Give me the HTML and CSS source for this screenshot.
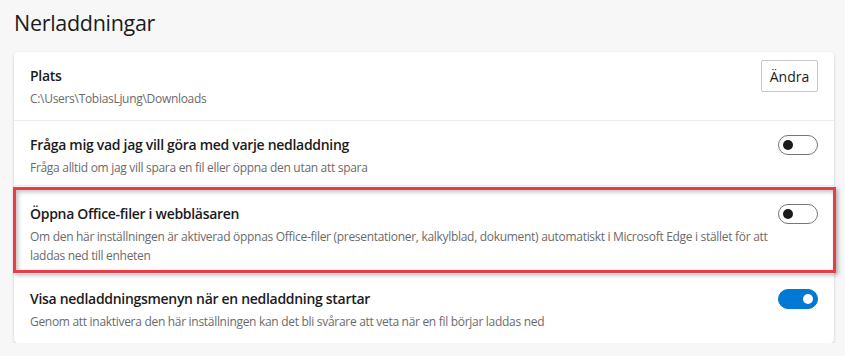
FILE: index.html
```html
<!DOCTYPE html>
<html lang="sv">
<head>
    <meta charset="UTF-8">
    <title>Nerladdningar</title>
    <link rel="stylesheet" href="styles.css">
</head>
<body>
    <h1 class="page-title">Nerladdningar</h1>
    <div class="card">
        <div class="row first">
            <div class="text">
                <div class="label">Plats</div>
                <div class="desc">C:\Users\TobiasLjung\Downloads</div>
            </div>
            <button class="btn">Ändra</button>
        </div>
        <div class="row">
            <div class="text">
                <div class="label">Fråga mig vad jag vill göra med varje nedladdning</div>
                <div class="desc">Fråga alltid om jag vill spara en fil eller öppna den utan att spara</div>
            </div>
            <span class="toggle"></span>
        </div>
        <div class="row marked">
            <div class="text">
                <div class="label">Öppna Office-filer i webbläsaren</div>
                <div class="desc">Om den här inställningen är aktiverad öppnas Office-filer (presentationer, kalkylblad, dokument) automatiskt i Microsoft Edge i stället för att laddas ned till enheten</div>
            </div>
            <span class="toggle"></span>
        </div>
        <div class="row last">
            <div class="text">
                <div class="label">Visa nedladdningsmenyn när en nedladdning startar</div>
                <div class="desc">Genom att inaktivera den här inställningen kan det bli svårare att veta när en fil börjar laddas ned</div>
            </div>
            <span class="toggle on"></span>
        </div>
    </div>
</body>
</html>
```
FILE: styles.css
```css
* {
    margin: 0;
    padding: 0;
    box-sizing: border-box;
}

body {
    background-color: #f7f7f7;
    font-family: "Open Sans", "Noto Sans", sans-serif;
    color: #1b1b1b;
    padding: 7px 11px 0 14px;
}

.page-title {
    font-size: 21.5px;
    font-weight: 500;
    line-height: 32px;
    letter-spacing: -0.3px;
    margin-bottom: 13px;
}

.card {
    background-color: #fff;
    border-radius: 4px;
    box-shadow: 0 1px 3px rgba(0, 0, 0, 0.18);
}

.row {
    display: flex;
    align-items: flex-start;
    justify-content: space-between;
    padding: 14px 16px 8px 16px;
    border-top: 1px solid #ebebeb;
    position: relative;
}

.row.first {
    border-top: none;
    min-height: 68px;
}

.row.marked {
    padding-top: 18px;
}

.row.last {
    padding-top: 15px;
    padding-bottom: 12px;
}

.text {
    max-width: 750px;
}

.label {
    font-size: 14px;
    font-weight: 600;
    line-height: 20px;
    letter-spacing: -0.3px;
}

.desc {
    font-size: 12px;
    color: #6b6b6b;
    line-height: 19px;
    margin-top: 3px;
    letter-spacing: -0.3px;
}

.btn {
    font-family: inherit;
    font-size: 14px;
    color: #1b1b1b;
    background-color: #fff;
    border: 1px solid #c6c6c6;
    border-radius: 2px;
    width: 57px;
    height: 32px;
    margin-top: -6px;
}

.toggle {
    flex: none;
    width: 40px;
    height: 20px;
    border: 1px solid #767676;
    border-radius: 10px;
    position: relative;
}

.toggle::after {
    content: "";
    position: absolute;
    left: 4px;
    top: 4px;
    width: 10px;
    height: 10px;
    border-radius: 50%;
    background-color: #1b1b1b;
}

.toggle.on {
    background-color: #0078d4;
    border-color: #0078d4;
}

.toggle.on::after {
    left: auto;
    right: 4px;
    background-color: #fff;
}

.marked::before {
    content: "";
    position: absolute;
    left: -1px;
    right: -2px;
    top: 1px;
    bottom: 0;
    border: 3px solid #ea3c46;
    box-shadow: 2px 2px 4px rgba(0, 0, 0, 0.3), inset 2px 2px 4px rgba(0, 0, 0, 0.25);
    pointer-events: none;
}
```
